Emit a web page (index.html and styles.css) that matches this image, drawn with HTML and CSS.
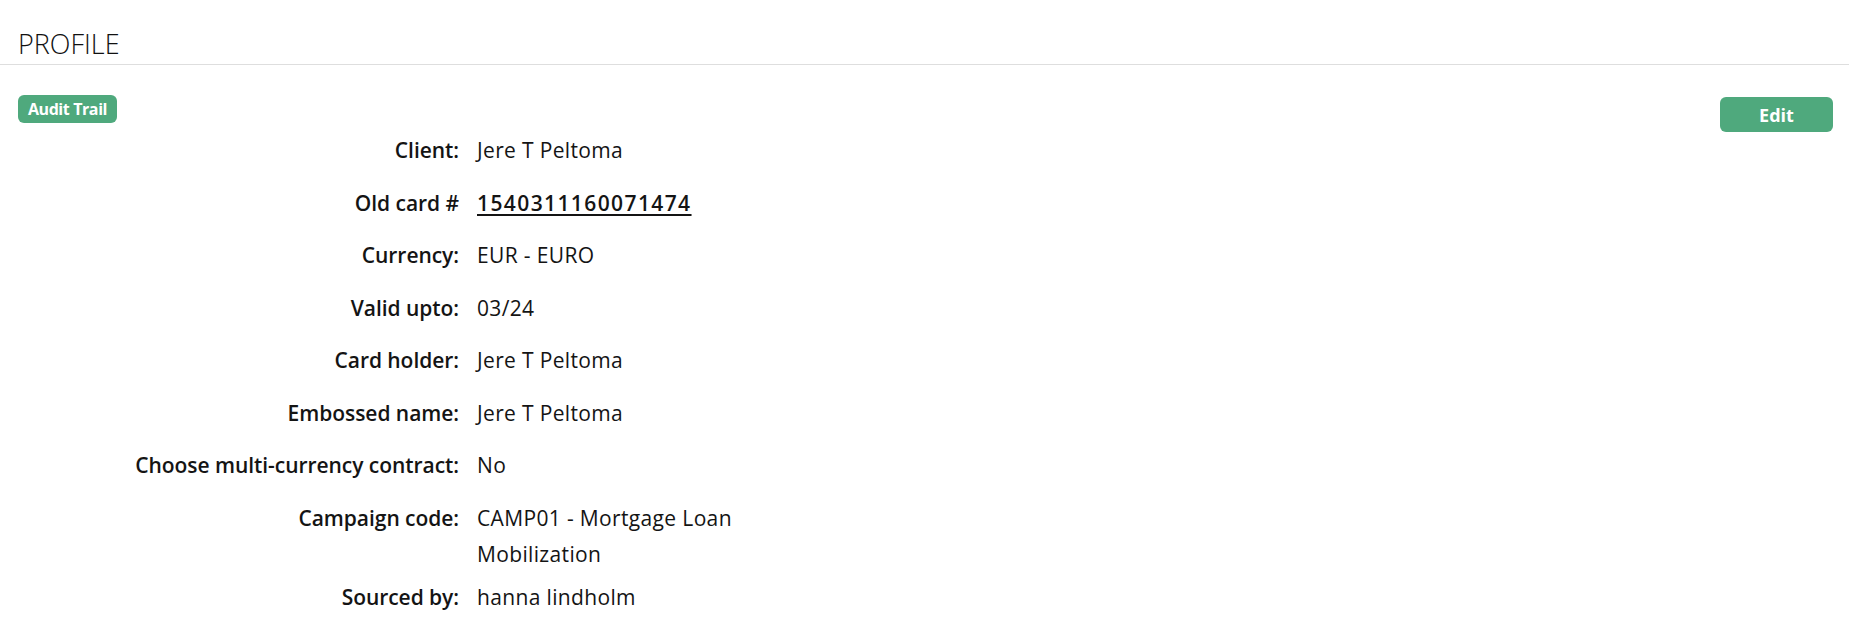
FILE: index.html
```html
<!DOCTYPE html>
<html lang="en">
<head>
<meta charset="utf-8">
<title>Profile</title>
<link rel="stylesheet" href="styles.css">
</head>
<body>
<header class="page-header">
  <h1 class="page-title">PROFILE</h1>
</header>
<div class="toolbar">
  <button class="btn btn-small" type="button">Audit Trail</button>
  <button class="btn btn-edit" type="button">Edit</button>
</div>
<dl class="details">
  <dt>Client:</dt><dd>Jere T Peltoma</dd>
  <dt>Old card #</dt><dd><a class="card-link" href="#">1540311160071474</a></dd>
  <dt>Currency:</dt><dd>EUR - EURO</dd>
  <dt>Valid upto:</dt><dd>03/24</dd>
  <dt>Card holder:</dt><dd>Jere T Peltoma</dd>
  <dt>Embossed name:</dt><dd>Jere T Peltoma</dd>
  <dt>Choose multi-currency contract:</dt><dd>No</dd>
  <dt>Campaign code:</dt><dd>CAMP01 - Mortgage Loan Mobilization</dd>
  <dt>Sourced by:</dt><dd>hanna lindholm</dd>
</dl>
</body>
</html>
```

FILE: styles.css
```css
html, body {
  margin: 0;
  padding: 0;
  background: #ffffff;
}

body {
  font-family: "Open Sans", "Liberation Sans", sans-serif;
  color: #141414;
}

.page-header {
  height: 65px;
  border-bottom: 1px solid #dedede;
  padding: 0 18px;
  box-sizing: border-box;
}

.page-title {
  margin: 0;
  padding-top: 26px;
  font-size: 27px;
  font-weight: 300;
  line-height: 36px;
  color: #111;
}

.toolbar {
  display: flex;
  justify-content: space-between;
  align-items: flex-start;
  padding: 0 16px 0 18px;
  margin-top: 30px;
}

.btn {
  border: none;
  background: #4fa97d;
  color: #ffffff;
  font-family: "Open Sans", "Liberation Sans", sans-serif;
  font-weight: 700;
  cursor: pointer;
}

.btn-small {
  width: 99px;
  height: 28px;
  border-radius: 6px;
  font-size: 16px;
  letter-spacing: -0.4px;
  padding: 0;
}

.btn-edit {
  width: 113px;
  height: 35px;
  margin-top: 2px;
  border-radius: 6px;
  font-size: 18px;
  padding: 0;
}

.details {
  display: grid;
  grid-template-columns: 441px 300px;
  column-gap: 18px;
  row-gap: 7.5px;
  margin: 0;
  padding: 0 18px;
  font-size: 21px;
  line-height: 36px;
}

.details dt {
  text-align: right;
  font-weight: 600;
  min-height: 45px;
  letter-spacing: -0.05px;
}

.details dd {
  margin: 0;
  font-weight: 400;
  letter-spacing: 0.35px;
}

.card-link {
  color: #141414;
  font-weight: 600;
  text-decoration: underline;
  text-decoration-thickness: 2px;
  text-underline-offset: 3px;
  letter-spacing: 1.4px;
}
```
